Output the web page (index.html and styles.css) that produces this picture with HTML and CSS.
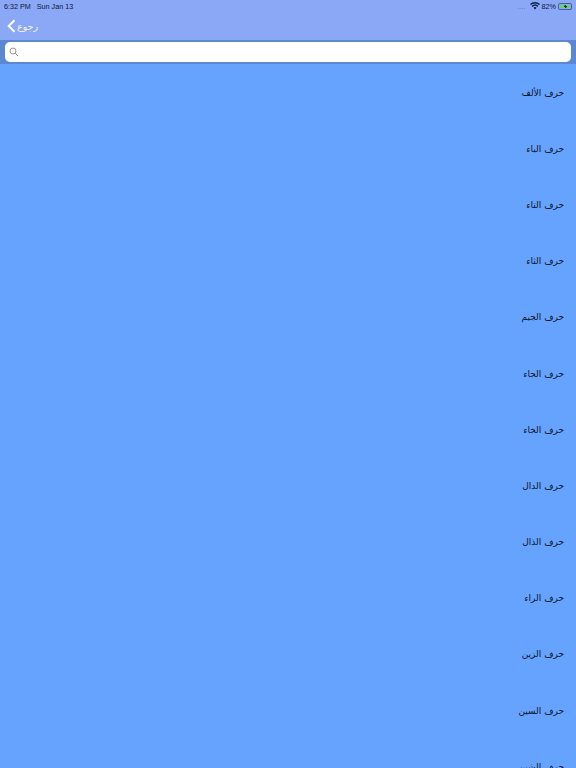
FILE: index.html
```html
<!DOCTYPE html>
<html lang="ar">
<head>
<meta charset="utf-8">
<title>حروف</title>
<link rel="stylesheet" href="styles.css">
</head>
<body>
<header class="top">
  <div class="status">
    <div class="status-left"><span>6:32 PM</span><span>Sun Jan 13</span></div>
    <div class="status-right">
      <span class="dots">....</span>
      <svg class="wifi" width="10" height="8" viewBox="0 0 10 8"><path d="M5 7.6 3.4 5.7a2.4 2.4 0 0 1 3.2 0zM2.6 4.9 1.6 3.8a5 5 0 0 1 6.8 0L7.4 4.9a3.600 3.600 0 0 0-4.800 0zM.9 3.100 0 2a7.300 7.300 0 0 1 10 0L9.100 3.100a6 6 0 0 0-8.200 0z" fill="#10204a"/></svg>
      <span class="pct">82%</span>
      <span class="battery"><span class="battery-fill"><svg width="5" height="7" viewBox="0 0 5 7"><path d="M3 0 .8 4h1.400L1.800 7 4.200 3H2.800z" fill="#10204a"/></svg></span></span>
    </div>
  </div>
  <nav class="nav">
    <svg width="9" height="14" viewBox="0 0 9 14"><path d="M7.500 1.200 1.700 7l5.800 5.800" fill="none" stroke="#fff" stroke-width="2"/></svg>
    <span class="back">رجوع</span>
  </nav>
</header>
<div class="search">
  <div class="field">
    <svg width="10" height="10" viewBox="0 0 10 10"><circle cx="4" cy="4" r="3" fill="none" stroke="#8d8d93" stroke-width=".9"/><path d="m6.200 6.200 3 3" stroke="#8d8d93" stroke-width="1"/></svg>
  </div>
</div>
<main class="list" dir="rtl">
  <div class="row">حرف الألف</div>
  <div class="row">حرف الباء</div>
  <div class="row">حرف التاء</div>
  <div class="row">حرف الثاء</div>
  <div class="row">حرف الجيم</div>
  <div class="row">حرف الحاء</div>
  <div class="row">حرف الخاء</div>
  <div class="row">حرف الدال</div>
  <div class="row">حرف الذال</div>
  <div class="row">حرف الراء</div>
  <div class="row">حرف الزين</div>
  <div class="row">حرف السين</div>
  <div class="row">حرف الشين</div>
</main>
</body>
</html>
```
FILE: styles.css
```css
html, body { margin: 0; padding: 0; }
body {
  width: 576px;
  height: 768px;
  overflow: hidden;
  background: #66a3ff;
  font-family: "Liberation Sans", "DejaVu Sans", sans-serif;
}
.top { height: 40px; background: #8ba8f6; color: #0b1738; }
.status {
  height: 12px;
  display: flex;
  justify-content: space-between;
  align-items: center;
  padding: 0 4px;
  font-size: 7.200px;
}
.status-left { display: flex; gap: 6px; }
.status-right { display: flex; align-items: center; gap: 3px; }
.dots { color: #5a6a9c; margin-right: 1px; }
.pct { margin-left: -1px; margin-right: -1px; }
.battery {
  display: flex;
  width: 14px;
  height: 7px;
  padding: 1px;
  box-sizing: border-box;
  border: .5px solid #4a6090;
  border-radius: 2px;
}
.battery-fill {
  flex: 1;
  display: flex;
  align-items: center;
  justify-content: center;
  background: #63d46a;
  border-radius: 1px;
  overflow: hidden;
}
.nav { height: 28px; display: flex; align-items: center; gap: 1px; padding-left: 7px; color: #fff; }
.back { font-family: "DejaVu Sans", sans-serif; font-size: 9.500px; opacity: .9; }
.search { height: 24px; background: #5c87d3; padding: 2px 5px 2px 5px; box-sizing: border-box; }
.field {
  height: 20px;
  background: #fff;
  border-radius: 5px;
  display: flex;
  align-items: center;
  padding-left: 4px;
}
.list { display: flex; flex-direction: column; }
.row {
  height: 56.200px;
  flex: none;
  box-sizing: border-box;
  display: flex;
  align-items: center;
  padding: 1px 12px 0 0;
  font-family: "DejaVu Sans", sans-serif;
  font-size: 9px;
  color: #0a1428;
}
```
